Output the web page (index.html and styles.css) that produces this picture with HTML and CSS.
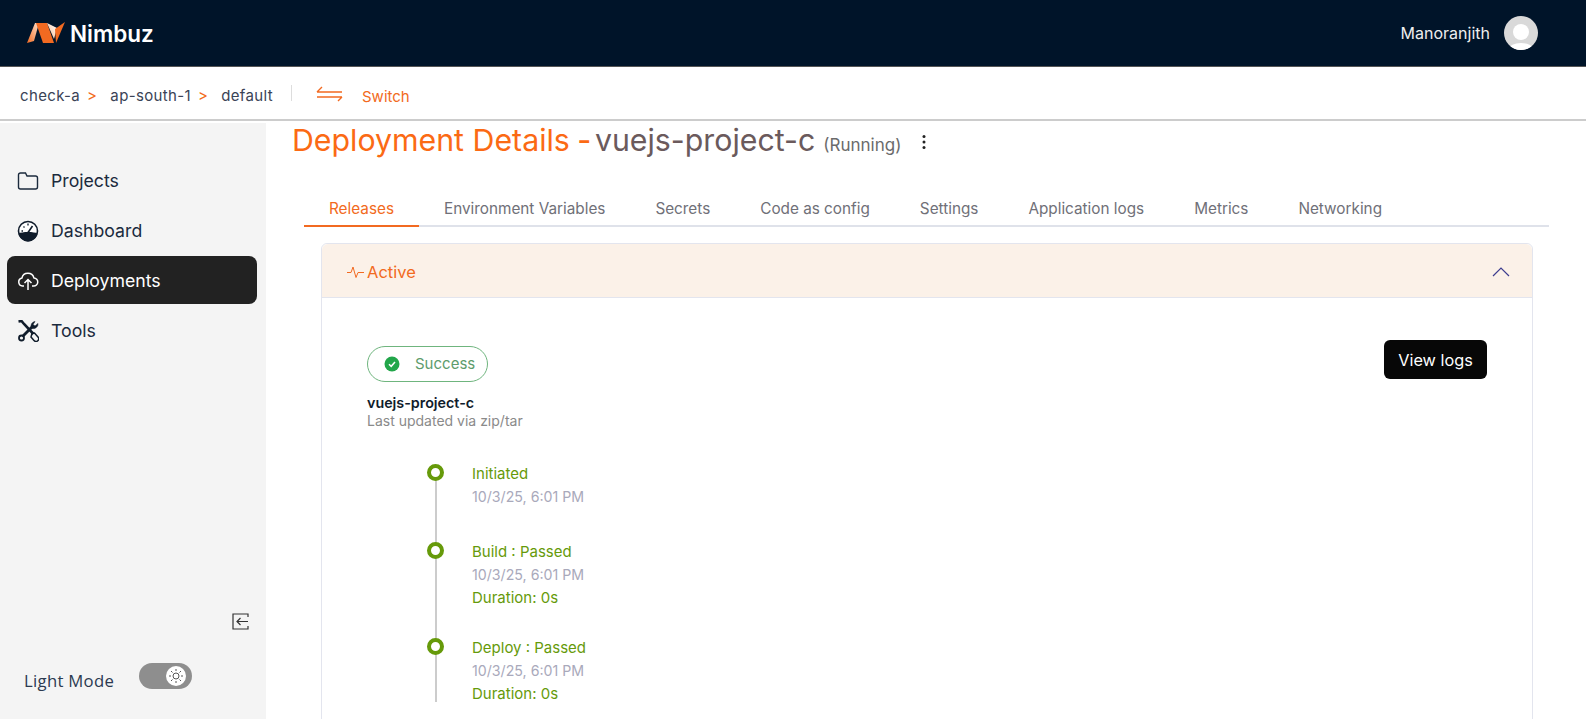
FILE: index.html
```html
<!DOCTYPE html>
<html lang="en">
<head>
    <meta charset="UTF-8">
    <meta name="viewport" content="width=device-width, initial-scale=1.0">
    <title>Deployment Details</title>
    <link rel="stylesheet" href="styles.css">
</head>
<body>

<header class="topbar">
    <div class="brand">
        <svg class="brand-logo" width="38" height="22" viewBox="0 0 38 22">
            <defs>
                <linearGradient id="logo-left" x1="0" y1="1" x2="1" y2="0">
                    <stop offset="0" stop-color="#f26a21"/>
                    <stop offset="1" stop-color="#fde3cf"/>
                </linearGradient>
                <linearGradient id="logo-right" x1="0" y1="1" x2="1" y2="0">
                    <stop offset="0" stop-color="#f9b98c"/>
                    <stop offset="1" stop-color="#ffffff"/>
                </linearGradient>
            </defs>
            <polygon points="0,21 8,1 12,1 7,19" fill="url(#logo-left)"/>
            <polygon points="9,1 20,1 27,21 16,21" fill="#f26a21"/>
            <polygon points="20,1 30,6 27,17" fill="url(#logo-right)"/>
            <polygon points="28,7 38,0 29,21" fill="#f26a21"/>
        </svg>
        <span class="brand-name">Nimbuz</span>
    </div>
    <div class="user">
        <span class="user-name">Manoranjith</span>
        <svg class="user-avatar" width="34" height="34" viewBox="0 0 34 34">
            <defs><clipPath id="avatar-clip"><circle cx="17" cy="17" r="17"/></clipPath></defs>
            <circle cx="17" cy="17" r="17" fill="#d9d9d9"/>
            <g clip-path="url(#avatar-clip)" fill="#fff">
                <circle cx="17" cy="16" r="8"/>
                <ellipse cx="17" cy="33" rx="12" ry="6"/>
            </g>
        </svg>
    </div>
</header>

<div class="subbar">
    <div class="crumbs">
        <span>check-a</span><span class="crumb-sep">&gt;</span>
        <span>ap-south-1</span><span class="crumb-sep">&gt;</span>
        <span>default</span>
    </div>
    <div class="subbar-divider"></div>
    <svg class="switch-icon" width="28" height="16" viewBox="0 0 28 16" fill="none" stroke="#f26a21" stroke-width="1.4">
        <path d="M1 6H26M1 6L6 1"/>
        <path d="M1 11H26M26 11L22 15"/>
    </svg>
    <span class="switch-label">Switch</span>
</div>

<div class="layout">
    <aside class="sidebar">
        <nav class="side-nav">
            <a class="side-item">
                <svg width="22" height="22" viewBox="0 0 22 22" fill="none" stroke="#1b2a3d" stroke-width="1.4">
                    <path d="M1.500 5V17a2 2 0 0 0 2 2h15a2 2 0 0 0 2-2V8a2 2 0 0 0-2-2H10L8.500 3H3.500A2 2 0 0 0 1.500 5z"/>
                </svg>
                <span>Projects</span>
            </a>
            <a class="side-item">
                <svg width="22" height="22" viewBox="0 0 22 22">
                    <circle cx="11" cy="11" r="9.500" fill="#fff" stroke="#101c2b" stroke-width="1.600"/>
                    <path d="M1.600 13.500c3-2 16-2 18.800 0a9.500 9.500 0 0 1-18.800 0z" fill="#101c2b"/>
                    <path d="M11 12.500L15.500 6" stroke="#101c2b" stroke-width="1.600"/>
                    <path d="M4.500 11H6M6.500 6.500l1 1M11 3.500V5.500" stroke="#101c2b" stroke-width="1.300"/>
                </svg>
                <span>Dashboard</span>
            </a>
            <a class="side-item active">
                <svg width="22" height="22" viewBox="0 0 22 22" fill="none" stroke="#fff" stroke-width="1.500">
                    <path d="M7 16H5.500a4 4 0 0 1-.6-7.900 6.200 6.200 0 0 1 12-.2 4 4 0 0 1-.4 8.100H15"/>
                    <path d="M11 20V10M7.500 13L11 9.500L14.500 13"/>
                </svg>
                <span>Deployments</span>
            </a>
            <a class="side-item">
                <svg width="22" height="22" viewBox="0 0 22 22" fill="none" stroke="#101c2b">
                    <path d="M1.500 1.500L4.500 1L7 4L16.500 14" stroke-width="2.600"/>
                    <path d="M15.500 6.500L5.500 16.500" stroke-width="2.800"/>
                    <path d="M21 3.500a4.500 4.500 0 0 1-6.500 4.500 4.500 4.500 0 0 1 3.500-6.500L16 4.500l2 1.500z" fill="#101c2b" stroke-width="0.600"/>
                    <circle cx="4.500" cy="18" r="2.500" stroke-width="1.800"/>
                    <path d="M15 13.500l2.500-.5 3.500 4a2.400 2.400 0 0 1-4 3.500L14 17z" stroke-width="1.500"/>
                </svg>
                <span>Tools</span>
            </a>
        </nav>
        <div class="side-bottom">
            <svg class="collapse-icon" width="17" height="17" viewBox="0 0 17 17" fill="none" stroke="#333" stroke-width="1.200">
                <path d="M16 4V1H1V16H16V13"/>
                <path d="M16 8.500H5M8.500 5L5 8.500L8.500 12"/>
            </svg>
            <div class="mode-row">
                <span class="mode-label">Light Mode</span>
                <div class="mode-toggle">
                    <span class="mode-knob">
                        <svg width="16" height="16" viewBox="0 0 16 16" fill="none" stroke="#555" stroke-width="1">
                            <circle cx="8" cy="8" r="3"/>
                            <path d="M8 1v2M8 13v2M1 8h2M13 8h2M3 3l1.500 1.500M11.500 11.500L13 13M13 3l-1.500 1.500M4.500 11.500L3 13"/>
                        </svg>
                    </span>
                </div>
            </div>
        </div>
    </aside>

    <main class="content">
        <div class="page-title">
            <h1>Deployment Details <span class="title-dash">-</span> <span class="title-name">vuejs-project-c</span></h1>
            <span class="title-status">(Running)</span>
            <svg class="title-menu" width="6" height="16" viewBox="0 0 6 16" fill="#222">
                <circle cx="3" cy="2.500" r="1.500"/>
                <circle cx="3" cy="8" r="1.500"/>
                <circle cx="3" cy="13.500" r="1.500"/>
            </svg>
        </div>

        <div class="tabs">
            <div class="tab active">Releases</div>
            <div class="tab">Environment Variables</div>
            <div class="tab">Secrets</div>
            <div class="tab">Code as config</div>
            <div class="tab">Settings</div>
            <div class="tab">Application logs</div>
            <div class="tab">Metrics</div>
            <div class="tab">Networking</div>
        </div>

        <section class="release-card">
            <div class="release-head">
                <div class="release-title">
                    <svg width="18" height="14" viewBox="0 0 18 14" fill="none" stroke="#f26a21" stroke-width="1">
                        <path d="M0 7.500H4L6 2L9 12.500L11 7.500H17"/>
                    </svg>
                    <span>Active</span>
                </div>
                <svg width="18" height="10" viewBox="0 0 18 10" fill="none" stroke="#3d3d8f" stroke-width="1.200">
                    <path d="M1 9L9 1L17 9"/>
                </svg>
            </div>
            <div class="release-body">
                <div class="release-top">
                    <div>
                        <div class="status-pill">
                            <svg width="16" height="16" viewBox="0 0 16 16">
                                <circle cx="8" cy="8" r="7.500" fill="#22a64a"/>
                                <path d="M5 8.200L7.200 10.300L11 6" fill="none" stroke="#fff" stroke-width="1.500"/>
                            </svg>
                            <span>Success</span>
                        </div>
                        <div class="release-name">vuejs-project-c</div>
                        <div class="release-meta">Last updated via zip/tar</div>
                    </div>
                    <button class="logs-button">View logs</button>
                </div>

                <div class="timeline">
                    <div class="step step-short">
                        <span class="step-dot"></span>
                        <div class="step-title">Initiated</div>
                        <div class="step-time">10/3/25, 6:01 PM</div>
                    </div>
                    <div class="step">
                        <span class="step-dot"></span>
                        <div class="step-title">Build : Passed</div>
                        <div class="step-time">10/3/25, 6:01 PM</div>
                        <div class="step-title">Duration: 0s</div>
                    </div>
                    <div class="step">
                        <span class="step-dot"></span>
                        <div class="step-title">Deploy : Passed</div>
                        <div class="step-time">10/3/25, 6:01 PM</div>
                        <div class="step-title">Duration: 0s</div>
                    </div>
                </div>
            </div>
        </section>
    </main>
</div>

</body>
</html>
```

FILE: styles.css
```css
* {
    box-sizing: border-box;
}

body {
    font-family: 'Inter', sans-serif;
    margin: 0;
    height: 719px;
    overflow: hidden;
    background-color: #fff;
    color: #1b2a3d;
}

.topbar {
    display: flex;
    align-items: center;
    justify-content: space-between;
    height: 67px;
    padding: 0 48px 0 27px;
    background-color: #001429;
    border-bottom: 1px solid #555;
}

.brand {
    display: flex;
    align-items: center;
    gap: 5px;
}

.brand-name {
    font-size: 22.500px;
    font-weight: 600;
    color: #fff;
}

.user {
    display: flex;
    align-items: center;
    gap: 14px;
}

.user-name {
    font-size: 16px;
    color: #eee;
}

.subbar {
    display: flex;
    align-items: center;
    height: 54px;
    padding-left: 20px;
    border-bottom: 2px solid #ccc;
}

.crumbs {
    display: flex;
    align-items: center;
    width: 270px;
    padding-top: 4px;
    font-size: 15px;
    letter-spacing: 0.350px;
    color: #3a4356;
}

.crumb-sep {
    margin: 0 13px 0 7px;
    color: #f26a21;
}

.subbar-divider {
    width: 1px;
    height: 16px;
    margin: 0 24px 0 1px;
    background-color: #ddd;
}

.switch-icon {
    margin-top: 2px;
}

.switch-label {
    margin: 6px 0 0 18px;
    font-size: 15px;
    color: #f26a21;
}

.layout {
    display: flex;
    height: 598px;
}

.sidebar {
    display: flex;
    flex-direction: column;
    justify-content: space-between;
    width: 266px;
    margin-top: 2px;
    padding: 33px 9px 0 7px;
    background-color: #f4f4f4;
}

.side-nav {
    display: flex;
    flex-direction: column;
    gap: 2px;
}

.side-item {
    display: flex;
    align-items: center;
    gap: 12px;
    height: 48px;
    padding: 1px 0 0 10px;
    border-radius: 8px;
    font-size: 17.700px;
    color: #1b2a3d;
}

.side-item.active {
    background-color: #222;
    color: #fff;
}

.side-bottom {
    display: flex;
    flex-direction: column;
    padding-bottom: 22px;
}

.collapse-icon {
    align-self: flex-end;
    margin: 0 8px 33px 0;
}

.mode-row {
    display: flex;
    align-items: center;
    gap: 25px;
    padding-left: 17px;
}

.mode-label {
    font-family: 'Open Sans', sans-serif;
    font-size: 16.700px;
    letter-spacing: 0.300px;
    color: #2c3a50;
}

.mode-toggle {
    display: flex;
    justify-content: flex-end;
    align-items: center;
    width: 53px;
    height: 26px;
    margin-bottom: 8px;
    padding-right: 6px;
    border-radius: 13px;
    background-color: #8e8e8e;
}

.mode-knob {
    display: flex;
    align-items: center;
    justify-content: center;
    width: 20px;
    height: 20px;
    border-radius: 50%;
    background-color: #fff;
}

.content {
    flex: 1;
    min-width: 0;
    padding: 0 37px 0 26px;
}

.page-title {
    display: flex;
    align-items: baseline;
    height: 42px;
    padding-top: 1px;
    white-space: nowrap;
}

.page-title h1 {
    margin: 0;
    font-size: 30.300px;
    font-weight: 400;
    color: #fb6a14;
}

.title-dash {
    margin: 0 -5px 0 -1px;
    font-weight: 500;
}

.title-name {
    color: #6b5a5c;
}

.title-status {
    margin-left: 8px;
    font-size: 17px;
    color: #6b6b6b;
}

.title-menu {
    margin: -2px 0 0 20px;
    align-self: center;
}

.tabs {
    display: flex;
    margin: 28px 0 0 12px;
    border-bottom: 2px solid #dfe2ea;
}

.tab {
    padding: 8px 25px 7px;
    margin-bottom: -2px;
    border-bottom: 2px solid transparent;
    font-size: 15.300px;
    color: #707078;
}

.tab.active {
    color: #f26a21;
    border-bottom-color: #f26a21;
}

.release-card {
    width: 1212px;
    margin: 16px 0 0 29px;
    border: 1px solid #e3e5ee;
    border-radius: 6px;
}

.release-head {
    display: flex;
    align-items: center;
    justify-content: space-between;
    height: 54px;
    padding: 2px 22px 0 25px;
    background-color: #fbf1e8;
    border-bottom: 1px solid #e3e5ee;
    border-radius: 6px 6px 0 0;
}

.release-title {
    display: flex;
    align-items: center;
    gap: 2px;
    font-size: 16.500px;
    color: #f26a21;
}

.release-body {
    padding: 48px 45px 40px 45px;
}

.release-top {
    display: flex;
    justify-content: space-between;
    align-items: flex-start;
}

.status-pill {
    display: inline-flex;
    align-items: center;
    gap: 15px;
    width: 121px;
    height: 36px;
    padding: 0 0 2px 16px;
    border: 1px solid #6fb57e;
    border-radius: 18px;
    font-size: 15px;
    color: #5d9c6c;
}

.status-pill svg {
    margin-top: 2px;
}

.release-name {
    margin-top: 12px;
    font-size: 14.300px;
    font-weight: 600;
    color: #101c2b;
}

.release-meta {
    margin-top: 1px;
    font-size: 14px;
    color: #8a8a8a;
}

.logs-button {
    width: 103px;
    height: 39px;
    margin-top: -6px;
    border: 0;
    border-radius: 6px;
    background-color: #070707;
    color: #fff;
    font-family: 'Inter', sans-serif;
    font-size: 16.300px;
}

.timeline {
    margin: 42px 0 0 68px;
}

.step {
    display: flex;
    flex-direction: column;
    position: relative;
    height: 96px;
    padding-left: 35px;
    border-left: 2px solid #ccc;
}

.step:last-child {
    height: 57px;
}

.step-short {
    height: 78px;
}

.step-dot {
    position: absolute;
    left: -10px;
    top: -7px;
    width: 17px;
    height: 17px;
    border: 4.500px solid #669a0a;
    border-radius: 50%;
    background-color: #fff;
}

.step-dot + .step-title {
    margin-top: -9px;
}

.step-title {
    height: 23px;
    flex-shrink: 0;
    font-size: 15px;
    line-height: 23px;
    color: #669a0a;
}

.step-time {
    height: 23px;
    flex-shrink: 0;
    font-size: 14.200px;
    line-height: 23px;
    color: #a9a9bb;
}
```
